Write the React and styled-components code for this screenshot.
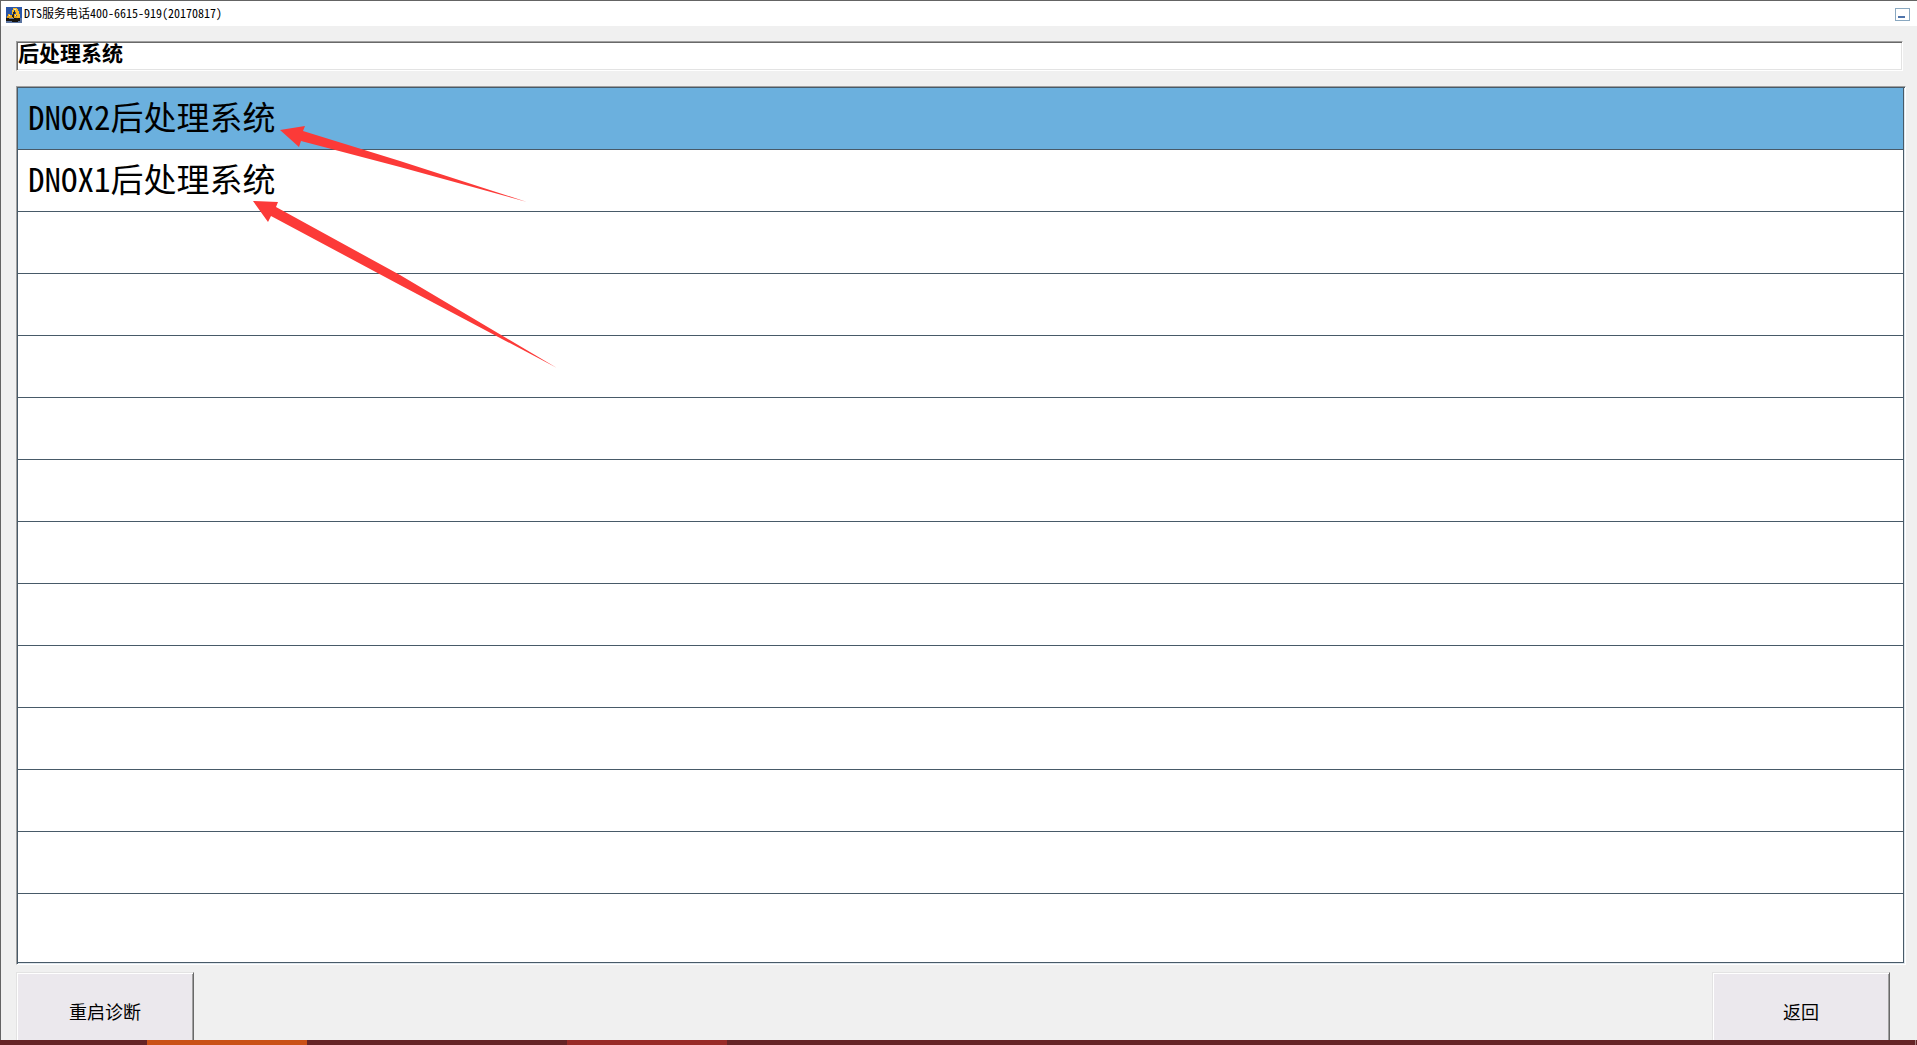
import React, { useState } from "react";
import styled, { createGlobalStyle } from "styled-components";

const systems = ["DNOX2后处理系统", "DNOX1后处理系统"];
const ROW_COUNT = 14;

const taskbarItems = [
	{ grow: 147, color: "#652426" },
	{ grow: 160, color: "#ca5016" },
	{ grow: 260, color: "#652426" },
	{ grow: 160, color: "#982a27" },
	{ grow: 1188, color: "#652426" },
];

const AppIcon = () => (
	<svg width="16" height="16" viewBox="0 0 16 16" shapeRendering="crispEdges" aria-hidden="true">
		<rect width="16" height="11" fill="#2a56a8" />
		<rect y="11" width="16" height="5" fill="#5b74a0" />
		<path d="M0 11h3v1h5v-1h6v3h-2v1H6v-1H0z" fill="#17140f" />
		<path d="M7 4h2v6H7zM5 8h3v3H5zM10 10h2v2h-2z" fill="#2a2416" />
		<path d="M7 1h4v1h1v2h1v3h1v4h-3V8h-1V5H9V3H8v2H7v2H6V3h1z" fill="#f7b92a" />
		<path d="M2 7h2v1h2v2h1v1H1V9h1zM8 7h2v2h1v2H8z" fill="#e8a51c" />
		<path d="M8 2h2v1H8zM3 8h1v1H3zM9 8h1v1H9z" fill="#fbe9a8" />
	</svg>
);

const Arrows = () => (
	<ArrowLayer width="600" height="400" viewBox="0 0 600 400" aria-hidden="true">
		<polygon points="280,130 305,126 303,131 400,161 527,202 400,167 301,141 299,147" />
		<polygon points="253,201 278,202 276,207 400,275 557,368 400,285 271,216 268,222" />
	</ArrowLayer>
);

const App = () => {
	const [selected, setSelected] = useState(0);

	return (
		<>
			<GlobalStyle />
			<Window>
				<TitleBar>
					<AppIcon />
					<h1>DTS服务电话400-6615-919(20170817)</h1>
					<MinimizeButton type="button" aria-label="最小化" />
				</TitleBar>
				<Content>
					<PathField readOnly value="后处理系统" aria-label="当前位置" />
					<SystemList>
						{Array.from({ length: ROW_COUNT }, (_, i) => (
							<Row key={i}>
								{systems[i] && (
									<RowButton
										type="button"
										$active={i === selected}
										onClick={() => setSelected(i)}
									>
										{systems[i]}
									</RowButton>
								)}
							</Row>
						))}
					</SystemList>
					<Actions>
						<ActionButton type="button">重启诊断</ActionButton>
						<ActionButton type="button">返回</ActionButton>
					</Actions>
				</Content>
				<Taskbar>
					{taskbarItems.map((item, i) => (
						<TaskbarItem key={i} $grow={item.grow} $color={item.color} />
					))}
				</Taskbar>
				<Arrows />
			</Window>
		</>
	);
};

const GlobalStyle = createGlobalStyle`
	* {
		box-sizing: border-box;
	}
	body {
		margin: 0;
		background: #f0f0f0;
	}
	body, button, input {
		font-family: "Noto Sans Mono CJK SC", "Noto Sans CJK SC", monospace;
		color: #000;
	}
`;

const Window = styled.div`
	position: relative;
	display: flex;
	flex-direction: column;
	height: 100vh;
	overflow: hidden;
	background: #f0f0f0;
`;

const TitleBar = styled.header`
	flex: none;
	display: flex;
	align-items: center;
	height: 26px;
	padding: 2px 7px 0 5px;
	background: #fff;
	border-top: 1px solid #646464;
	border-left: 1px solid #646464;
	h1 {
		flex: 1;
		margin: 0 0 0 2px;
		padding-bottom: 4px;
		font-size: 12px;
		font-weight: 400;
		line-height: 16px;
	}
`;

const MinimizeButton = styled.button`
	display: flex;
	align-items: flex-end;
	width: 15px;
	height: 13px;
	padding: 2px;
	background: #fff;
	border: 1px solid #8aa8c0;
	&::after {
		content: "";
		width: 7px;
		height: 2px;
		background: #4f74ab;
	}
`;

const Content = styled.main`
	flex: 1;
	min-height: 0;
	display: flex;
	flex-direction: column;
	padding: 15px 11px 0 15px;
	border-left: 1px solid #646464;
	overflow: hidden;
`;

const PathField = styled.input`
	flex: none;
	height: 30px;
	margin-right: 3px;
	padding: 0 1px 8px;
	font-size: 21px;
	font-weight: 700;
	line-height: 20px;
	background: #fff;
	border: 1px solid;
	border-color: #a0a0a0 #fff #fff #a0a0a0;
	box-shadow: inset 1px 1px #696969, inset -1px -1px #e3e3e3;
	outline: none;
`;

const SystemList = styled.ul`
	flex: 1;
	min-height: 0;
	display: flex;
	flex-direction: column;
	margin: 15px 0 0;
	padding: 1px 2px 2px 1px;
	list-style: none;
	background: #fff;
	border: 1px solid;
	border-color: #a0a0a0 #fff #fff #a0a0a0;
	box-shadow: inset 1px 1px #485a68, inset -1px -1px #dfe6ec, inset -2px -2px #485a68;
`;

const Row = styled.li`
	flex: none;
	height: 62px;
	border-bottom: 1px solid #485a68;
	&:last-child {
		flex: 1;
		border-bottom: 0;
	}
`;

const RowButton = styled.button`
	display: block;
	width: 100%;
	height: 100%;
	padding: 0 10px 6px;
	border: 0;
	background: ${(props) => (props.$active ? "#6bb0de" : "#fff")};
	font-size: 33px;
	font-weight: 300;
	line-height: 50px;
	text-align: left;
`;

const Actions = styled.footer`
	flex: none;
	display: flex;
	justify-content: space-between;
	height: 75px;
	padding: 7px 16px 0 0;
	overflow: hidden;
`;

const ActionButton = styled.button`
	width: 178px;
	height: 80px;
	padding: 0 0 2px;
	background: #ebe8ed;
	border: 1px solid;
	border-color: #e3e3e3 #696969 #696969 #e3e3e3;
	box-shadow: inset 1px 1px #fff, inset -1px -1px #a0a0a0;
	font-size: 18px;
	line-height: 24px;
`;

const Taskbar = styled.div`
	flex: none;
	display: flex;
	height: 5px;
	background: #652426;
`;

const TaskbarItem = styled.div`
	flex: ${(props) => props.$grow} 0 0;
	background: ${(props) => props.$color};
	&:last-child {
		margin-right: 1px;
		border-right: 1px solid #a58080;
	}
`;

const ArrowLayer = styled.svg`
	position: absolute;
	top: 0;
	left: 0;
	fill: #fc3a38;
	pointer-events: none;
`;

export default App;
